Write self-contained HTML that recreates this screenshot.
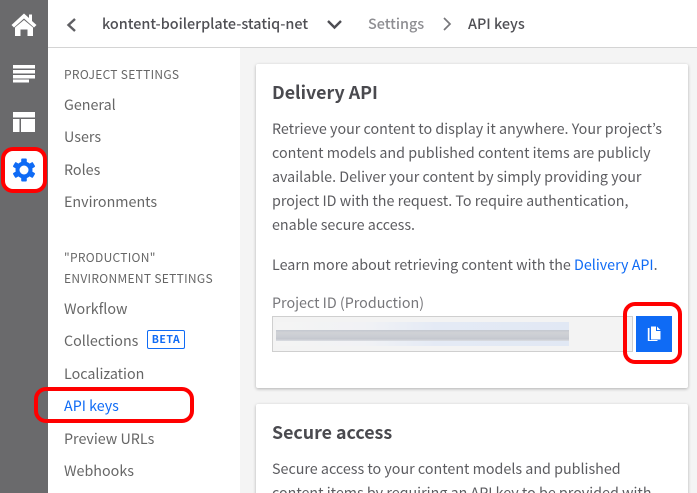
<!DOCTYPE html>
<html><head><meta charset="utf-8">
<style>
html,body{margin:0;padding:0;width:697px;height:493px;overflow:hidden}
body{background:#fff;font-family:"Noto Sans CJK JP","Liberation Sans",sans-serif;color:#55555a}
#r{position:absolute;left:0;top:0;width:697px;height:493px;overflow:hidden}
.t{position:absolute;white-space:nowrap;font-size:14.3px;line-height:20px}
.b{position:absolute;box-sizing:content-box}
.nav{color:#666;left:64px}
.h{color:#666;left:64px;font-size:12px;letter-spacing:.3px}
.p{left:272px;color:#5c5c60}
</style></head><body><div id="r">
<div class="b" style="left:48px;top:47px;width:649px;height:1px;background:#d4d4d4"></div>
<div class="b" style="left:240px;top:48px;width:457px;height:445px;background:#f4f4f4"></div>
<div class="b" style="left:0;top:0;width:48px;height:493px;background:#6a6a6c"></div>

<svg class="b" style="left:0;top:0" width="48" height="200" viewBox="0 0 48 200">
<path d="M24 13.500 L11.500 25 L14 27.500 L24 18.500 L34 27.500 L36.500 25 L32 21 V14.500 H29 V18 Z" fill="#fff"/>
<path d="M15 27.500 L24 20 L33 27.500 V36 H27.500 V29.500 H20.500 V36 H15 Z" fill="#fff"/>
<path d="M13 65h22v3.500H13zM13 70h22v3.500H13zM13 75h22v3.500H13zM13 79.500h16v3H13z" fill="#fff"/>
<path d="M13 112h22v5.500H13zM13 119h6.500V132H13zM21 119h14V132H21z" fill="#fff"/>
</svg>

<div class="b" style="left:1px;top:147px;width:38px;height:38px;background:#fff;border:4px solid #f00;border-radius:12px"></div>
<svg class="b" style="left:11px;top:157px" width="26" height="26" viewBox="0 0 26 26">
<g fill="#0f6bf5"><circle cx="13" cy="13" r="8.500"/>
<rect x="10.200" y="1.500" width="5.600" height="23" rx="1"/>
<rect x="10.200" y="1.500" width="5.600" height="23" rx="1" transform="rotate(60 13 13)"/>
<rect x="10.200" y="1.500" width="5.600" height="23" rx="1" transform="rotate(120 13 13)"/></g>
<circle cx="13" cy="13" r="4.500" fill="#fff"/>
</svg>

<svg class="b" style="left:60px;top:10px" width="300" height="30" viewBox="0 0 300 30">
<path d="M15 9 L8.500 15 L15 21" fill="none" stroke="#5f5f63" stroke-width="2.400"/>
<path d="M268 11 L274.500 17.500 L281 11" fill="none" stroke="#4d4d52" stroke-width="2.400"/>
</svg>
<svg class="b" style="left:440px;top:16px" width="14" height="18" viewBox="0 0 14 18">
<path d="M4 2 L10 8 L4 14" fill="none" stroke="#77777b" stroke-width="1.700"/>
</svg>
<div class="t" style="left:102px;top:14px;font-weight:500;color:#4f4f54;font-size:14.400px">kontent-boilerplate-statiq-net</div>
<div class="t" style="left:368px;top:14px;font-weight:500;color:#8e8e92;font-size:14.400px">Settings</div>
<div class="t" style="left:468px;top:14px;font-weight:500;color:#4f4f54;font-size:14.400px">API keys</div>

<div class="t h" style="top:65px">PROJECT SETTINGS</div>
<div class="t nav" style="top:95px">General</div>
<div class="t nav" style="top:127px">Users</div>
<div class="t nav" style="top:160px">Roles</div>
<div class="t nav" style="top:192px">Environments</div>
<div class="t h" style="top:248px">"PRODUCTION"</div>
<div class="t h" style="top:269px">ENVIRONMENT SETTINGS</div>
<div class="t nav" style="top:299px">Workflow</div>
<div class="t nav" style="top:331px">Collections</div>
<div class="b" style="left:147px;top:330px;width:36px;height:17px;border:1px solid #0f6bf5;border-radius:2px;color:#0f6bf5;font-size:10.500px;font-weight:700;line-height:17px;text-align:center;letter-spacing:.5px">BETA</div>
<div class="t nav" style="top:364px">Localization</div>
<div class="t nav" style="top:396px;color:#0f6bf5">API keys</div>
<div class="t nav" style="top:429px">Preview URLs</div>
<div class="t nav" style="top:461px">Webhooks</div>
<div class="b" style="left:34px;top:387px;width:152px;height:28px;border:4px solid #f00;border-radius:12px"></div>

<div class="b" style="left:256px;top:64px;width:432px;height:324px;background:#fff;border-radius:2px;box-shadow:0 1px 3px rgba(0,0,0,.28)"></div>
<div class="b" style="left:256px;top:404px;width:432px;height:100px;background:#fff;border-radius:2px;box-shadow:0 1px 3px rgba(0,0,0,.28)"></div>

<div class="t" style="left:272px;top:80px;font-size:17.800px;line-height:24px;font-weight:700;color:#4a4a4f">Delivery API</div>
<div class="t p" style="top:119px">Retrieve your content to display it anywhere. Your project’s</div>
<div class="t p" style="top:143px">content models and published content items are publicly</div>
<div class="t p" style="top:167px">available. Deliver your content by simply providing your</div>
<div class="t p" style="top:191px">project ID with the request. To require authentication,</div>
<div class="t p" style="top:215px">enable secure access.</div>
<div class="t p" style="top:255px">Learn more about retrieving content with the <span style="color:#0f6bf5">Delivery API</span>.</div>
<div class="t" style="left:272px;top:293px;color:#77777b">Project ID (Production)</div>

<div class="b" style="left:272px;top:316px;width:359px;height:34px;background:#f3f3f3;border:1px solid #cfcfcf"></div>
<div class="b" style="left:276px;top:322px;width:293px;height:24px;background:linear-gradient(90deg,#f4f4f4 0%,#f1f2f5 30%,#e4eaf5 55%,#e1e8f4 100%)"></div>
<div class="b" style="left:276px;top:330px;width:293px;height:11px;background:linear-gradient(180deg,#c4c8d0 0%,#d0d2d6 25%,#cacdd3 60%,#c4c7ce 80%,#dcdee2 100%)"></div>

<div class="b" style="left:636px;top:316px;width:36px;height:36px;background:#0f6bf5"></div>
<svg class="b" style="left:646px;top:325px" width="16" height="18" viewBox="0 0 16 18">
<path d="M3.500 3 H1.800 V16 H11.500 V15 H3.500 Z" fill="#fff"/>
<path d="M5 1.500 H10 V6 H14.500 V14.500 H5 Z" fill="#fff"/>
<path d="M11 1.500 L14.500 5 H11 Z" fill="#fff"/>
</svg>
<div class="b" style="left:623px;top:302px;width:51px;height:54px;border:4px solid #f00;border-radius:12px"></div>

<div class="t" style="left:272px;top:420px;font-size:17.800px;line-height:24px;font-weight:700;color:#4a4a4f">Secure access</div>
<div class="t p" style="top:459px">Secure access to your content models and published</div>
<div class="t p" style="top:483px">content items by requiring an API key to be provided with</div>
</div></body></html>
